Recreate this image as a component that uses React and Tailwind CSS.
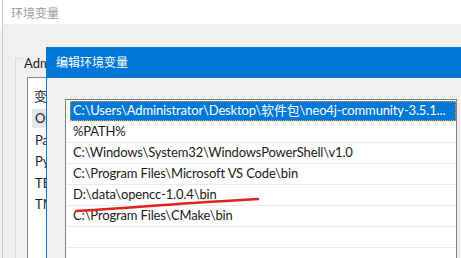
import React from 'react';

const paths = [
    String.raw`C:\Users\Administrator\Desktop\软件包\neo4j-community-3.5.1...`,
    String.raw`%PATH%`,
    String.raw`C:\Windows\System32\WindowsPowerShell\v1.0`,
    String.raw`C:\Program Files\Microsoft VS Code\bin`,
    String.raw`D:\data\opencc-1.0.4\bin`,
    String.raw`C:\Program Files\CMake\bin`,
    '',
    '',
];

const userVars = ['变量', 'OneDrive', 'Path', 'PyCharm', 'TEMP', 'TMP'];

const font = { fontFamily: 'Lato, "Noto Sans CJK SC", sans-serif' };

function BackWindow() {
    return (
        <div className="flex-1 flex flex-col border-l border-[#c8c8c8]">
            <div className="h-[30px] bg-white flex items-center pl-[8px] pt-[4px] text-[12px] text-[#9a9a9a]">环境变量</div>
            <div className="flex-1 bg-[#f0f0f0] pt-[34px] pl-[12px]">
                {/* group box */}
                <div className="relative border-l border-t border-[#dcdcdc] h-[200px] pl-[11px] pt-[18px]">
                    <span className="absolute left-[7px] top-[-5px] bg-[#f0f0f0] px-[1px] text-[13px] leading-[18px] text-[#1a1a1a]">
                        Administrator 的用户变量(U)
                    </span>
                    <div className="h-[190px] bg-white border-l border-t border-[#828790] flex flex-col text-[13px] text-[#1f1a2e]">
                        <div className="h-[30px] flex items-center pl-[6px] pt-[8px]">{userVars[0]}</div>
                        {userVars.slice(1).map((v, i) => (
                            <div key={v} className="h-[21.5px] flex items-center">
                                <span className={`ml-[4px] pl-[3px] h-[19px] flex items-center ${i === 0 ? 'bg-[#e6e6e6]' : ''}`}>{v}</span>
                            </div>
                        ))}
                    </div>
                </div>
            </div>
        </div>
    );
}

function EditDialog() {
    return (
        <div className="absolute left-[46px] top-[47px] right-0 bottom-0 flex flex-col border-l border-[#0078d7] bg-[#f0f0f0]">
            <div className="h-[31px] shrink-0 bg-[#0078d7] flex items-center pl-[9px] text-[12px] text-white">编辑环境变量</div>
            <div className="flex-1 pt-[21px] pl-[18px] pr-[4px]">
                <div className="h-[200px] bg-white border border-[#828282] pt-px text-[13px] tracking-[-0.15px]">
                    {paths.map((p, i) => (
                        <div key={i} className="h-[21px] ml-px border-b border-[#ebebeb] flex">
                            {i === 0 ? (
                                <div className="flex-1 ml-[3px] h-[20px] bg-[#0078d7] border border-dotted border-[#f0a040] flex items-center pl-[2px] text-white whitespace-nowrap overflow-hidden">
                                    {p}
                                </div>
                            ) : (
                                <div className="flex-1 ml-[3px] flex items-center pl-[3px] text-[#1a1a1a] whitespace-nowrap overflow-hidden">{p}</div>
                            )}
                        </div>
                    ))}
                </div>
            </div>
        </div>
    );
}

export default function App() {
    return (
        <div className="relative w-[461px] h-[258px] overflow-hidden flex bg-[#f0f0f0]" style={font}>
            <div className="w-[2px] flex flex-col">
                <div className="h-[30px] bg-white" />
                <div className="flex-1 bg-[#f4f4f4]" />
            </div>
            <BackWindow />
            <EditDialog />
            {/* red underline annotation */}
            <svg className="absolute inset-0 pointer-events-none" width="461" height="258">
                <path d="M76 211 Q 110 209 150 206 T 258 199" fill="none" stroke="#e3201b" strokeWidth="2.5" strokeLinecap="round" />
            </svg>
        </div>
    );
}
